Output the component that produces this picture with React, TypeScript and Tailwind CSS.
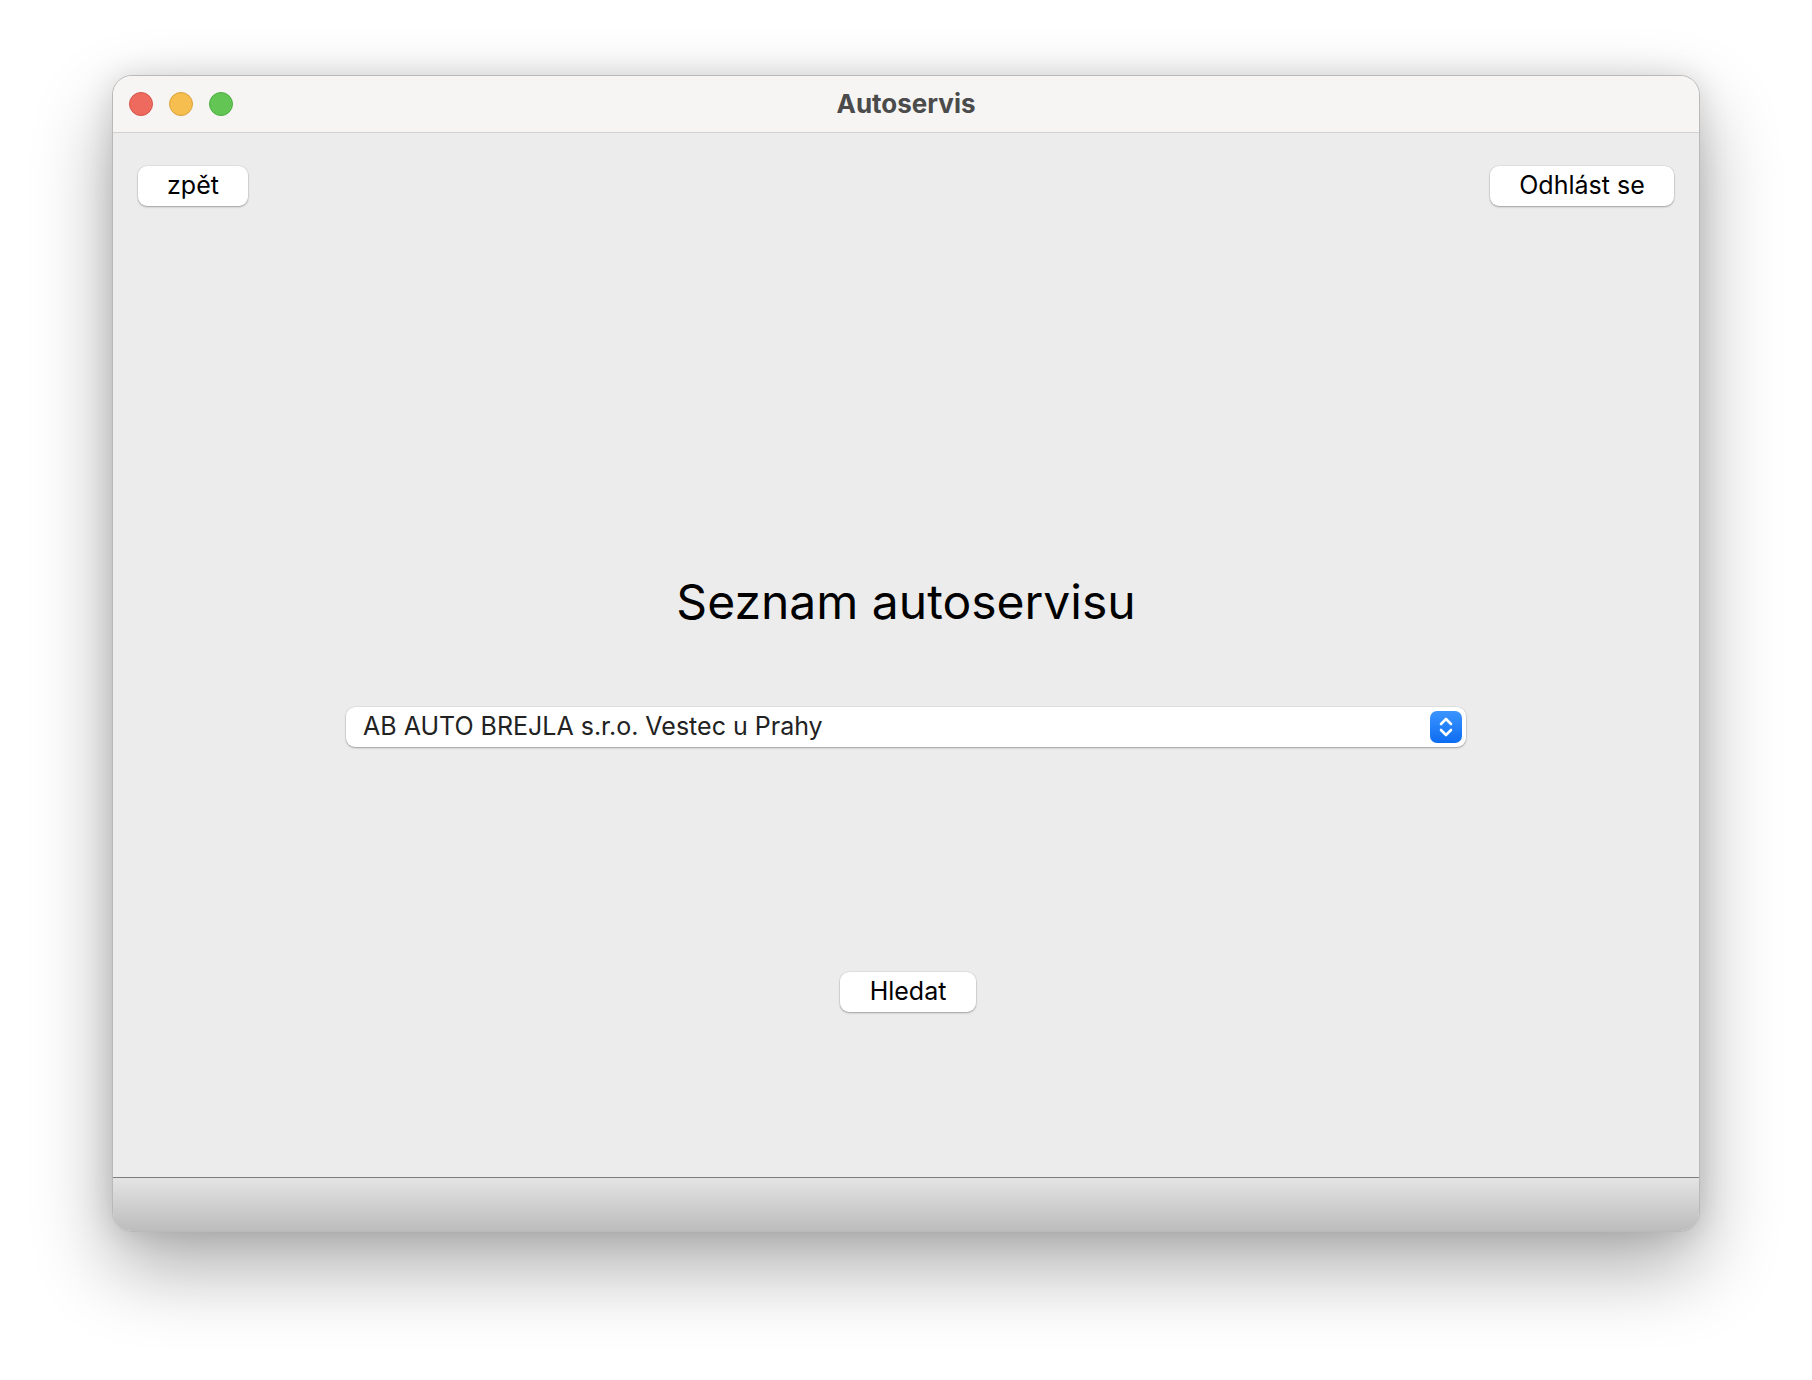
import { useState } from 'react';

const font = { fontFamily: 'Inter, "Noto Sans", "Liberation Sans", sans-serif' };

const TrafficLights = () => (
  <div className="flex items-center gap-4">
    <span className="h-6 w-6 rounded-full bg-[#ee6a5f] border border-[#d5544a]" />
    <span className="h-6 w-6 rounded-full bg-[#f5be4f] border border-[#d9a23a]" />
    <span className="h-6 w-6 rounded-full bg-[#62c554] border border-[#4ead42]" />
  </div>
);

const MacButton = ({ label, className = '' }: { label: string; className?: string }) => (
  <button
    className={`h-10 rounded-[9px] bg-white pb-[2px] text-[25px] leading-none text-black shadow-[0_1px_2px_rgba(0,0,0,0.3),0_0_0_0.5px_rgba(0,0,0,0.08)] ${className}`}
  >
    {label}
  </button>
);

export default function App() {
  const [servis] = useState('AB AUTO BREJLA s.r.o. Vestec u Prahy');

  return (
    <div className="min-h-[1380px] w-[1812px] bg-white pl-[112px] pt-[75px]" style={font}>
      <div className="flex h-[1157px] w-[1588px] flex-col overflow-hidden rounded-[20px] border border-[#b9b9b9] bg-[#ececec] shadow-[0_35px_80px_rgba(0,0,0,0.33),0_0_30px_rgba(0,0,0,0.12)]">
        {/* title bar */}
        <div className="relative flex h-[57px] shrink-0 items-center border-b border-[#d2d2d2] bg-[#f6f5f4] px-[16px]">
          <TrafficLights />
          <div className="absolute inset-0 flex items-center justify-center pb-[2px]">
            <span className="text-[26px] font-bold text-[#4b4b4b]">Autoservis</span>
          </div>
        </div>

        {/* content */}
        <div className="flex flex-1 flex-col">
          <div className="flex justify-between px-[25px] pt-[33px]">
            <MacButton label="zpět" className="w-[110px]" />
            <MacButton label="Odhlást se" className="w-[184px]" />
          </div>

          <h1 className="mt-[364px] text-center text-[48px] leading-[64px] font-normal text-black">
            Seznam autoservisu
          </h1>

          <div className="mt-[73px] flex justify-center">
            <div className="flex h-10 w-[1120px] items-center justify-between rounded-[9px] bg-white pl-[17px] pr-[4px] shadow-[0_1px_2px_rgba(0,0,0,0.3),0_0_0_0.5px_rgba(0,0,0,0.08)]">
              <span className="text-[25px] text-[#222222]">{servis}</span>
              <span className="flex h-8 w-8 items-center justify-center rounded-[7px] bg-gradient-to-b from-[#3a95ff] to-[#0b6cf2]">
                <svg width="18" height="24" viewBox="0 0 18 24" fill="none" stroke="white" strokeWidth="2.6" strokeLinecap="round" strokeLinejoin="round">
                  <path d="M4 9 L9 4 L14 9" />
                  <path d="M4 15 L9 20 L14 15" />
                </svg>
              </span>
            </div>
          </div>

          <div className="mt-[225px] flex justify-center pl-[4px]">
            <MacButton label="Hledat" className="w-[136px]" />
          </div>
        </div>

        {/* bottom bar */}
        <div className="h-[54px] shrink-0 border-t border-[#7d7d7d] bg-gradient-to-b from-[#e4e4e4] to-[#bcbcbc]" />
      </div>
    </div>
  );
}
